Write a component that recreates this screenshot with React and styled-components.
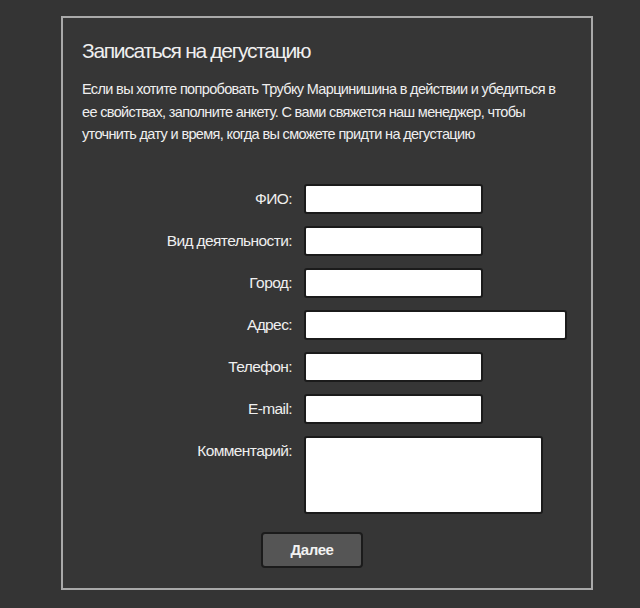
import React from 'react'
import styled, { createGlobalStyle } from 'styled-components'

const GlobalStyle = createGlobalStyle`
  html, body {
    margin: 0;
    padding: 0;
    background: #343434;
  }
  body {
    font-family: "Liberation Sans", Arial, sans-serif;
    color: #efefef;
  }
`

const Page = styled.div`
  width: 640px;
  height: 608px;
  padding: 16px 0 0 61px;
  box-sizing: border-box;
`

const Panel = styled.div`
  width: 532px;
  height: 574px;
  box-sizing: border-box;
  border: 2px solid #a9a9a9;
  background: #363636;
  padding: 20px 19px;
`

const Title = styled.h1`
  margin: 0;
  font-size: 21px;
  line-height: 26px;
  font-weight: normal;
  letter-spacing: -1.3px;
`

const Intro = styled.p`
  margin: 14px 0 0;
  font-size: 14.5px;
  line-height: 22.5px;
  letter-spacing: -0.65px;
  white-space: nowrap;
`

const Form = styled.form`
  margin-top: 38px;
`

const Fields = styled.div`
  display: grid;
  grid-template-columns: 210px auto;
  column-gap: 12px;
  row-gap: 12px;
  justify-content: start;
`

const Label = styled.label`
  text-align: right;
  font-size: 15.5px;
  line-height: 30px;
  letter-spacing: -0.6px;
  align-self: start;
`

const Input = styled.input`
  box-sizing: border-box;
  width: ${p => p.$w}px;
  height: 30px;
  margin: 0;
  border: 2px solid #1b1b1b;
  border-radius: 3px;
  background: #fff;
  outline: none;
`

const Comment = styled.textarea`
  box-sizing: border-box;
  width: 239px;
  height: 78px;
  margin: 0;
  border: 2px solid #1b1b1b;
  border-radius: 3px;
  background: #fff;
  resize: none;
  outline: none;
`

const Submit = styled.button`
  display: block;
  margin: 18px 0 0 179px;
  width: 102px;
  height: 36px;
  box-sizing: border-box;
  border: 2px solid #1b1b1b;
  border-radius: 4px;
  background: #555555;
  color: #f2f2f2;
  font-family: inherit;
  font-size: 15px;
  font-weight: bold;
  letter-spacing: -0.4px;
  cursor: pointer;
`

const fields = [
  { label: 'ФИО:', w: 179 },
  { label: 'Вид деятельности:', w: 179 },
  { label: 'Город:', w: 179 },
  { label: 'Адрес:', w: 263 },
  { label: 'Телефон:', w: 179 },
  { label: 'E-mail:', w: 179 },
]

export default function App() {
  return (
    <Page>
      <GlobalStyle />
      <Panel>
        <Title>Записаться на дегустацию</Title>
        <Intro>
          Если вы хотите попробовать Трубку Марцинишина в действии и убедиться в
          <br />
          ее свойствах, заполните анкету. С вами свяжется наш менеджер, чтобы
          <br />
          уточнить дату и время, когда вы сможете придти на дегустацию
        </Intro>
        <Form onSubmit={e => e.preventDefault()}>
          <Fields>
            {fields.map(f => (
              <React.Fragment key={f.label}>
                <Label>{f.label}</Label>
                <Input type="text" $w={f.w} />
              </React.Fragment>
            ))}
            <Label>Комментарий:</Label>
            <Comment />
          </Fields>
          <Submit type="submit">Далее</Submit>
        </Form>
      </Panel>
    </Page>
  )
}
